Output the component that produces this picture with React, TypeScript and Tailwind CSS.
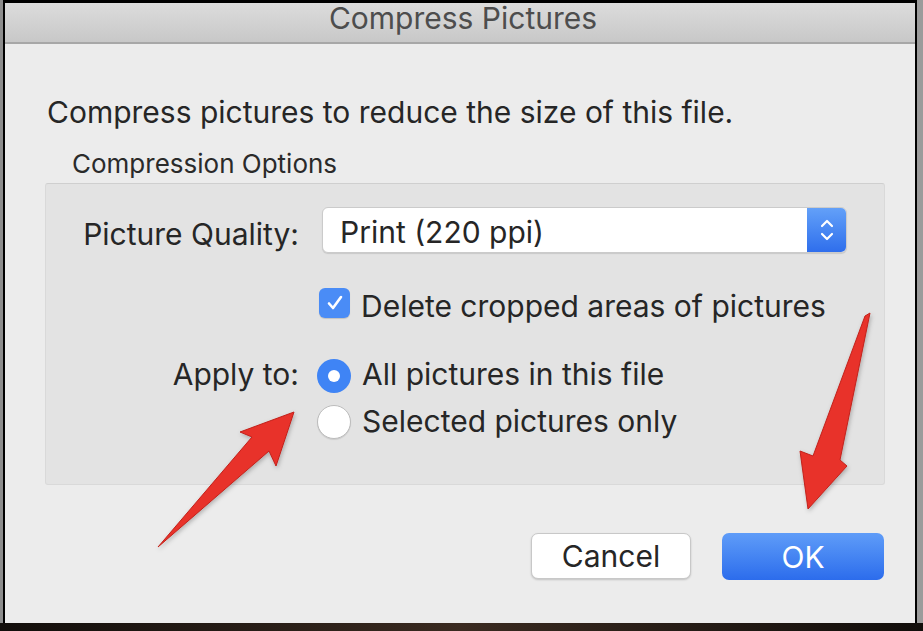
import React from "react";

function Chevrons() {
  return (
    <svg width="16" height="26" viewBox="0 0 16 26" fill="none">
      <path d="M3 9 L8 4 L13 9" stroke="white" strokeWidth="2.2" strokeLinecap="round" strokeLinejoin="round" />
      <path d="M3 17 L8 22 L13 17" stroke="white" strokeWidth="2.2" strokeLinecap="round" strokeLinejoin="round" />
    </svg>
  );
}

function Check() {
  return (
    <svg width="20" height="20" viewBox="0 0 20 20" fill="none">
      <path d="M4 10.5 L8 15 L16 4" stroke="white" strokeWidth="2.6" strokeLinecap="round" strokeLinejoin="round" />
    </svg>
  );
}

export default function App() {
  return (
    <div
      className="relative w-[923px] h-[631px] bg-[#17120e] flex flex-col overflow-hidden"
      style={{ fontFamily: "Inter, 'Liberation Sans', sans-serif" }}
    >
      <div className="flex h-[623px]">
        <div className="w-[3px] bg-[#8d8d8d]" />
        <div className="flex-1 flex flex-col border-t-[3px] border-l-2 border-r-2 border-black">
          {/* Title bar */}
          <div className="h-[41px] shrink-0 bg-gradient-to-b from-[#dcdcdc] to-[#c8c8c8] border-b-2 border-[#a7a7a7] flex items-start justify-center">
            <span className="ml-[6px] text-[30px] leading-[30px] text-[#4d4d4d]">Compress Pictures</span>
          </div>
          {/* Body */}
          <div className="flex-1 bg-[#ececec] flex flex-col">
            <p className="mt-[53px] ml-[42px] text-[30px] leading-[30px] text-[#262626]">
              Compress pictures to reduce the size of this file.
            </p>
            <p className="mt-[24px] ml-[67px] text-[26px] leading-[26px] text-[#2a2a2a]">Compression Options</p>
            {/* Group box */}
            <div className="mt-[6px] ml-[40px] w-[840px] h-[302px] bg-[#e3e3e3] border border-[#d9d9d9] border-t-[#cfcfcf] rounded-[3px] flex flex-col">
              {/* Row 1 */}
              <div className="mt-[23px] flex items-start h-[46px]">
                <span className="w-[253px] mt-[12px] text-right text-[30px] leading-[30px] text-[#262626]">
                  Picture Quality:
                </span>
                <div className="ml-[23px] w-[525px] h-[46px] flex rounded-[6px] bg-white border border-[#cbcbcb] shadow-[0_1px_1px_rgba(0,0,0,0.12)] overflow-hidden">
                  <span className="flex-1 pl-[17px] pt-[9px] text-[30px] leading-[30px] text-[#262626]">
                    Print (220 ppi)
                  </span>
                  <div className="w-[39px] bg-gradient-to-b from-[#63a0f8] to-[#2f6eec] flex items-center justify-center">
                    <Chevrons />
                  </div>
                </div>
              </div>
              {/* Row 2 */}
              <div className="mt-[35px] flex items-start h-[30px]">
                <div className="ml-[273px] w-[31px] h-[30px] rounded-[6px] bg-[#4a8cf6] flex items-center justify-center shadow-[0_1px_1px_rgba(0,0,0,0.15)]">
                  <Check />
                </div>
                <span className="ml-[11px] mt-[3px] text-[30px] leading-[30px] text-[#262626]">
                  Delete cropped areas of pictures
                </span>
              </div>
              {/* Row 3 */}
              <div className="mt-[41px] flex items-start h-[32px]">
                <span className="w-[253px] mt-0 text-right text-[30px] leading-[30px] text-[#262626]">Apply to:</span>
                <div className="ml-[18px] w-[34px] h-[34px] rounded-full bg-[#3f84f5] flex items-center justify-center">
                  <div className="w-[12px] h-[12px] rounded-full bg-white" />
                </div>
                <span className="ml-[11px] mt-0 text-[30px] leading-[30px] text-[#262626]">
                  All pictures in this file
                </span>
              </div>
              {/* Row 4 */}
              <div className="mt-[14px] flex items-start h-[32px]">
                <div className="ml-[271px] w-[34px] h-[34px] rounded-full bg-white border border-[#bcbcbc] shadow-[0_1px_1px_rgba(0,0,0,0.1)]" />
                <span className="ml-[11px] mt-[1px] text-[30px] leading-[30px] text-[#262626]">
                  Selected pictures only
                </span>
              </div>
            </div>
            {/* Buttons */}
            <div className="mt-[48px] flex justify-end gap-[31px] mr-[31px]">
              <button className="w-[160px] h-[46px] rounded-[7px] bg-white border border-[#c8c8c8] shadow-[0_1px_2px_rgba(0,0,0,0.18)] text-[30px] leading-[30px] text-[#262626]">
                Cancel
              </button>
              <button className="w-[162px] h-[47px] rounded-[7px] bg-gradient-to-b from-[#5f9cf8] to-[#2c6cec] text-[30px] leading-[30px] text-white">
                OK
              </button>
            </div>
          </div>
        </div>
        <div className="w-[6px] bg-[#9b9b9b]" />
      </div>
      <div className="h-[8px] bg-gradient-to-r from-[#120e0b] via-[#3a2a20] to-[#120e0b]" />

      {/* Red annotation arrows */}
      <svg className="absolute inset-0 pointer-events-none" width="923" height="631" viewBox="0 0 923 631">
        <defs>
          <filter id="sh" x="-20%" y="-20%" width="140%" height="140%">
            <feDropShadow dx="1" dy="2" stdDeviation="2" floodColor="#000" floodOpacity="0.25" />
          </filter>
        </defs>
        <polygon
          points="158,547 252,437 240,432 294,412 276,466 269,451"
          fill="#e8312a"
          stroke="#c2221b"
          strokeWidth="1"
          strokeLinejoin="round"
          filter="url(#sh)"
        />
        <polygon
          points="865,316 870,313 840,460 847,466 808,509 800,451 813,456"
          fill="#e8312a"
          stroke="#c2221b"
          strokeWidth="1"
          strokeLinejoin="round"
          filter="url(#sh)"
        />
      </svg>
    </div>
  );
}
